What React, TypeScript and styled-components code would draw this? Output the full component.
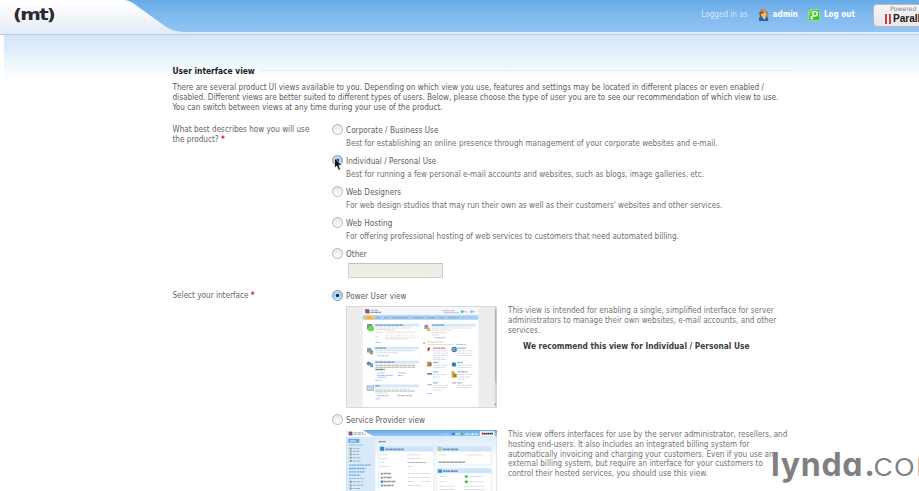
import React from 'react';
import styled, { createGlobalStyle } from 'styled-components';

const Global = createGlobalStyle`
  * { box-sizing: border-box; }
  html, body { margin: 0; padding: 0; overflow: hidden; background: #fff; }
  body {
    font-family: "DejaVu Sans Condensed", "DejaVu Sans", sans-serif;
    font-size: 8.1px;
    line-height: 9.75px;
    color: #666;
  }
`;

const Page = styled.div`
  position: relative;
  width: 919px;
  height: 491px;
  overflow: hidden;
  background: #fff;
`;

const Header = styled.header`
  position: relative;
  height: 35px;
  display: flex;
  justify-content: space-between;
  border-bottom: 1px solid #c3ced9;
  background: linear-gradient(#69abe8 0, #7db8ee 14px, #93c4f4 32px, #e4ecf6 32px, #e4ecf6 34px);
`;

const Tab = styled.svg`
  display: block;
  flex: none;
`;

const Brand = styled.div`
  position: absolute;
  left: 12.5px;
  top: 6px;
  font: 700 15.5px/18px "DejaVu Sans", sans-serif;
  letter-spacing: -1.4px;
  color: #2e2a2d;
  transform: scaleX(1.28);
  transform-origin: 0 50%;
`;

const Account = styled.div`
  display: flex;
  align-items: center;
  height: 30px;
  color: #d4e8fb;
  font-size: 8.1px;
  white-space: nowrap;
`;

const AccountLink = styled.a<{ $gap: number }>`
  display: flex;
  align-items: center;
  gap: 4px;
  margin-left: ${(p) => p.$gap}px;
  color: #fff;
  font-weight: 700;
`;

const Powered = styled.div`
  margin-left: 18px;
  width: 46px;
  height: 23px;
  padding: 1px 0 0 11px;
  border: 1px solid #b9bcbf;
  border-right: 0;
  border-radius: 4px 0 0 4px;
  background: linear-gradient(#f4f4f4, #e9e9e9);
  overflow: hidden;
  font: 400 6.2px/8px "DejaVu Sans", sans-serif;
  color: #858585;
`;

const PoweredLabel = styled.div`
  padding-left: 5px;
  margin-top: -1px;
`;

const PoweredName = styled.div`
  display: flex;
  align-items: center;
  gap: 2px;
  font: 700 10.2px/12px "Liberation Sans", sans-serif;
  letter-spacing: -0.1px;
  color: #1a1a1a;
`;

const Bars = styled.span`
  flex: none;
  width: 6px;
  height: 10px;
  border: solid #c4414c;
  border-width: 0 2px;
`;

const Body = styled.main`
  margin-left: 4px;
  padding: 31.4px 0 0 168.5px;
  background: linear-gradient(#d3e7fa 0, #deedfb 14px, #f0f8fd 30px, #fff 44px);
`;

const Heading = styled.div`
  display: flex;
  align-items: center;
  gap: 5px;
  width: 619px;
  height: 10px;
  color: #222;
  font-size: 8.36px;
  font-weight: 700;
  white-space: nowrap;
  &::after {
    content: '';
    flex: 1;
    height: 1px;
    margin-top: -1px;
    background: #e6ebee;
  }
`;

const Intro = styled.p`
  margin: 7px 0 0;
  color: #5c5c5c;
  white-space: pre;
`;

const Field = styled.section<{ $top: number }>`
  display: grid;
  grid-template-columns: 159.5px 1fr;
  margin-top: ${(p) => p.$top}px;
`;

const Label = styled.div`
  padding-top: 1.4px;
  white-space: pre;
`;

const Required = styled.span`
  color: #d8242c;
  font-weight: 700;
`;

const Choice = styled.div<{ $height: number }>`
  display: grid;
  grid-template-columns: 14px 1fr;
  grid-template-rows: 12px auto;
  height: ${(p) => p.$height}px;
`;

const Radio = styled.span<{ $on?: boolean }>`
  width: 11px;
  height: 11px;
  border-radius: 50%;
  border: 1px solid ${(p) => (p.$on ? '#7f9ac0' : '#b4b4b4')};
  background: ${(p) =>
    p.$on
      ? 'radial-gradient(circle at 50% 50%, #14264a 0 1.2px, rgba(20,38,74,0) 2px), linear-gradient(#c3d7f3, #a5caf0 50%, #d3edfd)'
      : 'linear-gradient(#e6e6e6, #fff)'};
`;

const ChoiceName = styled.span`
  padding-top: 1.4px;
  line-height: 11px;
  letter-spacing: 0.04px;
  color: #5c5c5c;
`;

const Hint = styled.div`
  grid-column: 2;
  padding-top: 3.4px;
  color: #707070;
  white-space: pre;
`;

const OtherInput = styled.input`
  grid-column: 2;
  display: block;
  width: 95px;
  height: 15px;
  margin: 3px 0 0 1.5px;
  padding: 0;
  border: 1px solid #cfd0c9;
  border-top-color: #c0c1ba;
  background: #edeee6;
`;

const Preview = styled.div`
  grid-column: 2;
  display: grid;
  grid-template-columns: 151px 1fr;
  column-gap: 11px;
  padding-top: 4px;
`;

const Thumb = styled.svg`
  display: block;
  width: 151px;
  height: 102px;
`;

const Description = styled.div`
  white-space: pre;
  color: #747474;
`;

const Advice = styled.p`
  margin: 7px 0 0 15px;
  color: #3c3c3c;
  font-size: 8.27px;
  font-weight: 700;
`;

const Cursor = styled.svg`
  position: absolute;
  left: 333px;
  top: 157px;
`;

const Watermark = styled.div`
  position: absolute;
  left: 771px;
  top: 444.5px;
  display: flex;
  align-items: baseline;
  font: 700 32px/40px Inter, sans-serif;
  font-feature-settings: 'cv11';
  letter-spacing: 0.75px;
  color: #808080;
  white-space: nowrap;
`;

const WatermarkSuffix = styled.span`
  font-weight: 350;
  letter-spacing: 0.2px;
  transform: scaleX(1.14);
  transform-origin: 0 50%;
`;

const WatermarkDot = styled.span`
  width: 10px;
  padding-left: 1px;
`;

const UserIcon = () => (
  <svg width="11" height="12" viewBox="0 0 11 12">
    <path d="M1 12V9.5Q1 7 4 7h3q3 0 3.2 2.5V12Z" fill="#315fa8" />
    <path d="M4 8h4L6.4 10.5Z" fill="#e9f0fa" />
    <circle cx="5.4" cy="4.4" r="4" fill="#7a4a22" />
    <path d="M2.6 4.8Q5 4.8 6.4 2.6 9 3.2 8.8 5.6 7.8 8.6 5.8 8.6 3 8.2 2.6 4.8Z" fill="#f8b867" />
    <path d="M1.6 3.6Q2.6.4 6 .4q3.4.2 3.6 3.4Q6 1.4 1.6 3.6Z" fill="#e0963c" />
  </svg>
);

const LogoutIcon = () => (
  <svg width="12" height="12" viewBox="0 0 12 12">
    <rect x=".5" y=".5" width="11" height="11" rx="1.5" fill="#35c52b" stroke="#8fe07f" />
    <path d="M1 8l4-7H2L1 2Z" fill="#7fdf6c" />
    <circle cx="7" cy="4.8" r="2.2" fill="none" stroke="#fff" strokeWidth="1.5" />
    <path d="M5.4 6.4 3 9.2M3 7.4v2.2h2.2" fill="none" stroke="#fff" strokeWidth="1.3" />
  </svg>
);

type Line = [x: number, y: number, w: number, color?: string, h?: number];

const Lines = ({ items }: { items: Line[] }) => (
  <g fill="none">
    {items.map(([x, y, w, c = '#b0b4b8', h = 3], i) => (
      <path key={i} d={`M${x} ${y}h${w}`} stroke={c} strokeWidth={h} strokeDasharray="7 1 4 1 9 2" opacity={h > 3 ? 0.65 : 0.5} />
    ))}
  </g>
);

const BLUE = '#3f8bd4';
const DARK = '#4d5358';

const powerLines: Line[] = [
  [74, 13, 24, DARK, 3], [74, 19, 32, DARK, 4], [289, 14, 36, '#777'], [293, 20, 44, '#777'],
  [352, 17, 12, '#999'], [380, 17, 8, '#999'],
  [63, 35, 14, '#a06a10'], [89, 35, 12, '#5277a0'], [115, 35, 11, '#5277a0'], [139, 35, 48, '#5277a0'],
  [201, 35, 30, '#5277a0'], [243, 35, 22, '#5277a0'], [280, 35, 14, '#5277a0'], [308, 35, 28, '#5277a0'],
  [88, 57, 84, '#24699f', 4], [88, 66, 104], [88, 71, 58], [88, 79, 20], [118, 76, 90, '#bbb', 2],
  [118, 81, 90, '#bbb', 2], [88, 92, 12], [118, 89, 90, '#bbb', 2], [118, 94, 90, '#bbb', 2], [118, 99, 66],
  [88, 109, 16, BLUE], [88, 126, 33, '#24699f', 4], [88, 134, 120], [88, 140, 66], [94, 149, 34, BLUE],
  [88, 168, 58, '#24699f', 4], [88, 177, 120, '#555'], [88, 183, 120, '#555'], [88, 190, 28, '#333', 4],
  [94, 200, 23, BLUE], [94, 208, 48, BLUE], [94, 213, 28, BLUE], [155, 200, 26, BLUE], [155, 208, 16, BLUE],
  [88, 222, 18, BLUE], [88, 239, 14, '#24699f', 4], [88, 248, 104], [88, 254, 119, '#555'], [88, 260, 37],
  [94, 268, 34, BLUE], [155, 268, 43, BLUE], [88, 277, 16, BLUE],
  [258, 57, 36, '#24699f', 4], [258, 66, 114], [258, 72, 62], [258, 80, 42], [258, 87, 20], [264, 95, 34, BLUE],
  [243, 108, 50, '#df8b27'], [245, 115, 76], [330, 115, 30, BLUE],
  [261, 126, 36, '#b3262e', 4], [334, 126, 26, BLUE, 4], [261, 134, 40], [334, 134, 44], [261, 141, 44], [334, 141, 40],
  [261, 148, 44], [334, 148, 44], [261, 155, 30], [261, 160, 40],
  [261, 169, 16, BLUE, 4], [334, 169, 16, BLUE, 4], [261, 177, 42], [334, 177, 46], [261, 184, 34], [334, 184, 40],
  [261, 197, 16, BLUE, 4], [334, 197, 30, BLUE, 4], [261, 205, 38], [334, 205, 44], [261, 212, 24], [334, 212, 38], [334, 219, 20],
  [261, 230, 14, BLUE, 4], [334, 230, 14, BLUE, 4], [261, 237, 46], [334, 237, 44], [261, 244, 40], [334, 244, 40], [261, 251, 28],
  [242, 262, 16, BLUE],
];

const PowerThumb = () => (
  <Thumb viewBox="0 0 452 305" preserveAspectRatio="none">
    <rect x="1.5" y="1.5" width="449" height="302" fill="#ededed" stroke="#d9d9d9" strokeWidth="3" />
    <rect x="50" y="3" width="346" height="299" fill="#fff" />
    <path d="M50 3h346v24H50Z" fill="#f4f8fc" />
    <path d="M50 28h346v13H50Z" fill="#a9ccf3" />
    <path d="M57 28h27v13H57Z" fill="#fcc451" />
    <rect x="58" y="10" width="12" height="12" fill="#3763ae" />
    <path d="M58 10h6v6h-6zM64 16h6v6h-6z" fill="#d9444b" />
    <circle cx="348" cy="17" r="4" fill="#45bf61" />
    <circle cx="376" cy="17" r="4" fill="#8ebbd8" />
    <g fill="#d5e8fa">
      <path d="M84 53h135v8H84zM254 53h134v8H254zM84 122h135v8H84zM84 164h135v8H84zM84 235h135v8H84z" />
    </g>
    <rect x="63" y="54" width="16" height="17" rx="3" fill="#70889c" />
    <circle cx="75" cy="67" r="9" fill="#65dc4d" />
    <rect x="63" y="125" width="13" height="14" fill="#6aa3d6" />
    <path d="M71 132h10v12H71z" fill="#93a268" />
    <circle cx="68" cy="172" r="6" fill="#5889c5" />
    <path d="M72 171h9v12h-9z" fill="#7f9ba4" />
    <rect x="63" y="239" width="20" height="13" fill="#c8d9f2" stroke="#879fc8" strokeWidth="2" />
    <path d="M235 56h11v13h-11z" fill="#8f8db4" />
    <path d="M242 64h10v11h-10z" fill="#edb95b" />
    <path d="M234 107l4 7h-8z" fill="#f2a328" />
    <path d="M247 123q8 1 3 8l-3 5q-7-4 0-13Z" fill="#d02d3d" />
    <circle cx="324" cy="130" r="8" fill="#397b9e" />
    <path d="m319 125 8 9m0-9-7 9" stroke="#cfe3ee" strokeWidth="2" />
    <path d="m243 168 12 12m0-12-12 12" stroke="#e46942" strokeWidth="5" />
    <path d="m249 168 6 6-6 6" fill="none" stroke="#58a344" strokeWidth="4" />
    <circle cx="323" cy="175" r="7" fill="#2b83b4" />
    <path d="M243 203h15" stroke="#5d6573" strokeWidth="4" />
    <path d="M316 195h9v7h6v12h-15z" fill="#d9a92f" />
    <path d="M322 203h9v10h-9z" fill="#5b8a2e" opacity=".7" />
    <path d="M243 235h14" stroke="#a8c5d9" strokeWidth="4" />
    <path d="M318 230h12" stroke="#c4b284" strokeWidth="4" />
    <Lines items={powerLines} />
    <path d="M445 3h7v299h-7z" fill="#d6d6d6" />
    <path d="M446 10h4v220h-4z" fill="#b4b4b4" />
    <path d="m444 292 3 4 3-4z" fill="#777" />
  </Thumb>
);

const providerLines: Line[] = [
  [23, 8, 28, DARK], [23, 13, 36, DARK], [286, 12, 24, '#dceeff'], [329, 12, 12, '#fff', 4], [356, 12, 14, '#fff', 4], [386, 12, 10, '#fff', 4],
  [12, 33, 18, '#fff', 4], [9, 45, 42, BLUE], [20, 56, 20, '#4b7fa8'], [20, 64, 20, '#4b7fa8'], [20, 73, 18, '#4b7fa8'],
  [20, 83, 26, '#4b7fa8'], [20, 93, 26, '#4b7fa8'], [9, 105, 66, BLUE, 4], [9, 115, 50, BLUE, 4], [9, 125, 48, BLUE, 4], [9, 135, 34, BLUE, 4],
  [9, 145, 46, BLUE], [20, 155, 30, '#4b7fa8'], [20, 165, 34, '#4b7fa8'], [20, 175, 22, '#4b7fa8'],
  [98, 35, 20, '#444', 4], [118, 58, 56, '#24699f', 5], [290, 58, 48, '#24699f', 5],
  [102, 74, 22], [184, 74, 40], [102, 85, 24], [184, 85, 36], [102, 97, 12], [184, 97, 56, '#555'], [102, 109, 28], [184, 109, 16],
  [112, 130, 24, DARK, 4], [185, 130, 40], [228, 130, 24], [112, 142, 26, DARK, 4], [185, 142, 40], [228, 142, 24],
  [112, 154, 36, DARK, 4], [185, 154, 16], [228, 154, 24], [112, 166, 30, DARK, 4], [185, 166, 40],
  [277, 75, 24], [357, 75, 50], [277, 96, 80, '#3d4146', 4], [290, 123, 44, '#24699f', 5],
  [282, 139, 18], [366, 139, 42], [282, 155, 14], [366, 155, 44], [282, 168, 42], [355, 168, 60], [282, 178, 42], [355, 178, 60],
];

const ProviderThumb = () => (
  <Thumb viewBox="0 0 452 305" preserveAspectRatio="none">
    <defs>
      <linearGradient id="bar" x2="0" y2="1">
        <stop stopColor="#62a7e5" />
        <stop offset="1" stopColor="#98c8f6" />
      </linearGradient>
      <linearGradient id="canvas" x2="0" y2="1">
        <stop stopColor="#dcecfb" />
        <stop offset=".25" stopColor="#fff" />
      </linearGradient>
    </defs>
    <rect width="452" height="305" fill="#fff" />
    <rect x="0" y="20" width="90" height="285" fill="#d9eafb" />
    <rect x="88" y="20" width="362" height="285" fill="url(#canvas)" />
    <path d="M50 0h402v19H90Q78 19 66 10Z" fill="url(#bar)" />
    <rect x="8" y="5" width="11" height="11" fill="#3763ae" />
    <path d="M8 5h6v6H8zM14 11h5v5h-5z" fill="#d9444b" />
    <rect x="7" y="26" width="33" height="12" rx="2" fill="#68a4df" />
    <rect x="401" y="4" width="44" height="14" rx="2" fill="#fff" />
    <path d="M406 11h4" stroke="#cc2d3b" strokeWidth="7" />
    <path d="M411 11h29" stroke="#333" strokeWidth="5" strokeDasharray="6 1 4 1" />
    <circle cx="321" cy="12" r="4" fill="#4a6eae" />
    <circle cx="348" cy="12" r="4" fill="#40c454" />
    <circle cx="379" cy="12" r="4" fill="#d8eefb" />
    <g fill="#fff" stroke="#c3dcf3" strokeWidth="1.5">
      <path d="M98 49h165v256H98zM270 49h166v56H270zM270 114h166v191H270z" />
    </g>
    <path d="M99 50h163v14H99zM271 50h164v14H271zM271 115h164v14H271z" fill="#cfe4f9" />
    <path d="M102 50h12v12h-12zM276 118h11v10h-11z" fill="#3488c9" />
    <path d="M275 50h11v12h-11z" fill="#afc99b" />
    <g fill="#7899b7">
      <path d="M11 53h6v6h-6zM11 70h6v6h-6zM11 90h6v6h-6zM11 152h6v6h-6zM11 172h6v6h-6z" />
      <path d="M104 140h6v6h-6zM104 163h6v6h-6z" />
    </g>
    <g fill="#b59b54">
      <path d="M11 61h6v6h-6zM11 80h6v6h-6zM11 162h6v6h-6zM104 128h6v6h-6z" />
    </g>
    <path d="M104 151h7v7h-7z" fill="#3f7fd2" />
    <circle cx="360" cy="139" r="4.5" fill="#47be3f" />
    <circle cx="360" cy="155" r="4.5" fill="#47be3f" />
    <Lines items={providerLines} />
    <path d="M451 19v286M.5 0v305" stroke="#bdd7f0" strokeWidth="2" />
  </Thumb>
);

const uses = [
  { name: 'Corporate / Business Use', hint: 'Best for establishing an online presence through management of your corporate websites and e-mail.' },
  { name: 'Individual / Personal Use', hint: 'Best for running a few personal e-mail accounts and websites, such as blogs, image galleries, etc.', on: true },
  { name: 'Web Designers', hint: "For web design studios that may run their own as well as their customers' websites and other services." },
  { name: 'Web Hosting', hint: 'For offering professional hosting of web services to customers that need automated billing.' },
];

export default function App() {
  return (
    <Page>
      <Global />
      <Header>
        <Tab width="190" height="35" viewBox="0 0 190 35">
          <defs>
            <linearGradient id="tab" x2="0" y2="1">
              <stop offset=".1" stopColor="#fff" />
              <stop offset="1" stopColor="#e2ebf7" />
            </linearGradient>
          </defs>
          <path d="M0 0H125Q131 1 137 6L162 24Q172 32 184 32H190V34H0Z" fill="url(#tab)" />
        </Tab>
        <Brand>(mt)</Brand>
        <Account>
          <span>Logged in as</span>
          <AccountLink $gap={10}><UserIcon />admin</AccountLink>
          <AccountLink $gap={10}><LogoutIcon />Log out</AccountLink>
          <Powered>
            <PoweredLabel>Powered</PoweredLabel>
            <PoweredName><Bars />Parallels</PoweredName>
          </Powered>
        </Account>
      </Header>
      <Body>
        <Heading>User interface view</Heading>
        <Intro>
          {'There are several product UI views available to you. Depending on which view you use, features and settings may be located in different places or even enabled /\n' +
            'disabled. Different views are better suited to different types of users. Below, please choose the type of user you are to see our recommendation of which view to use.\n' +
            'You can switch between views at any time during your use of the product.'}
        </Intro>
        <Field $top={11.3}>
          <Label>{'What best describes how you will use\nthe product? '}<Required>*</Required></Label>
          <div>
            {uses.map((u) => (
              <Choice key={u.name} $height={30.9}>
                <Radio $on={u.on} />
                <ChoiceName>{u.name}</ChoiceName>
                <Hint>{u.hint}</Hint>
              </Choice>
            ))}
            <Choice $height={42.6}>
              <Radio />
              <ChoiceName>Other</ChoiceName>
              <OtherInput aria-label="Other" disabled />
            </Choice>
          </div>
        </Field>
        <Field $top={0}>
          <Label>Select your interface <Required>*</Required></Label>
          <div>
            <Choice $height={124}>
              <Radio $on />
              <ChoiceName>Power User view</ChoiceName>
              <Preview>
                <PowerThumb />
                <Description>
                  {'This view is intended for enabling a single, simplified interface for server\nadministrators to manage their own websites, e-mail accounts, and other\nservices.'}
                  <Advice>We recommend this view for Individual / Personal Use</Advice>
                </Description>
              </Preview>
            </Choice>
            <Choice $height={120}>
              <Radio />
              <ChoiceName>Service Provider view</ChoiceName>
              <Preview>
                <ProviderThumb />
                <Description>
                  {'This view offers interfaces for use by the server administrator, resellers, and\nhosting end-users. It also includes an integrated billing system for\nautomatically invoicing and charging your customers. Even if you use an\nexternal billing system, but require an interface for your customers to\ncontrol their hosted services, you should use this view.'}
                </Description>
              </Preview>
            </Choice>
          </div>
        </Field>
      </Body>
      <Cursor width="10" height="15" viewBox="0 0 10 15">
        <path d="M1.5 1v10l2.3-2 1.8 4.3 2-.9L5.8 8.3H9Z" fill="#111" stroke="#fff" strokeWidth=".7" />
      </Cursor>
      <Watermark>
        lynda<WatermarkDot>.</WatermarkDot>
        <WatermarkSuffix>com</WatermarkSuffix>
      </Watermark>
    </Page>
  );
}
